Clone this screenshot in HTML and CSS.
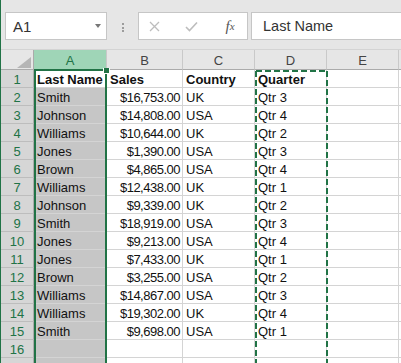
FILE: index.html
```html
<!DOCTYPE html>
<html>
<head>
    <meta charset="UTF-8">
    <title>Sheet</title>
    <link rel="stylesheet" href="styles.css">
</head>
<body>
<div class="app">
    <div class="toolbar">
        <div class="name-box">
            <span>A1</span>
            <span class="name-arrow"></span>
        </div>
        <div class="grip"><i></i><i></i><i></i></div>
        <div class="fx-buttons">
            <span class="fx-btn">
                <svg width="11" height="11" viewBox="0 0 11 11"><path d="M1 1 L10 10 M10 1 L1 10" stroke="#bdbdbd" stroke-width="1.3" fill="none"/></svg>
            </span>
            <span class="fx-btn">
                <svg width="13" height="11" viewBox="0 0 13 11"><path d="M1 6 L4.5 9.5 L12 1.5" stroke="#bdbdbd" stroke-width="1.6" fill="none"/></svg>
            </span>
            <span class="fx-btn fx-label">f<sub>x</sub></span>
        </div>
        <div class="formula">Last Name</div>
    </div>

    <div class="sheet">
        <div class="row hdr-row">
            <div class="cell corner"></div>
            <div class="cell col-hdr active">A</div>
            <div class="cell col-hdr">B</div>
            <div class="cell col-hdr">C</div>
            <div class="cell col-hdr">D</div>
            <div class="cell col-hdr">E</div>
            <div class="cell col-hdr"></div>
        </div>
        <div class="row">
            <div class="cell row-hdr">1</div>
            <div class="cell sel current bold">Last Name</div>
            <div class="cell bold">Sales</div>
            <div class="cell bold">Country</div>
            <div class="cell bold">Quarter</div>
            <div class="cell"></div>
            <div class="cell"></div>
        </div>
        <div class="row">
            <div class="cell row-hdr">2</div>
            <div class="cell sel">Smith</div>
            <div class="cell num">$16,753.00</div>
            <div class="cell">UK</div>
            <div class="cell">Qtr 3</div>
            <div class="cell"></div>
            <div class="cell"></div>
        </div>
        <div class="row">
            <div class="cell row-hdr">3</div>
            <div class="cell sel">Johnson</div>
            <div class="cell num">$14,808.00</div>
            <div class="cell">USA</div>
            <div class="cell">Qtr 4</div>
            <div class="cell"></div>
            <div class="cell"></div>
        </div>
        <div class="row">
            <div class="cell row-hdr">4</div>
            <div class="cell sel">Williams</div>
            <div class="cell num">$10,644.00</div>
            <div class="cell">UK</div>
            <div class="cell">Qtr 2</div>
            <div class="cell"></div>
            <div class="cell"></div>
        </div>
        <div class="row">
            <div class="cell row-hdr">5</div>
            <div class="cell sel">Jones</div>
            <div class="cell num">$1,390.00</div>
            <div class="cell">USA</div>
            <div class="cell">Qtr 3</div>
            <div class="cell"></div>
            <div class="cell"></div>
        </div>
        <div class="row">
            <div class="cell row-hdr">6</div>
            <div class="cell sel">Brown</div>
            <div class="cell num">$4,865.00</div>
            <div class="cell">USA</div>
            <div class="cell">Qtr 4</div>
            <div class="cell"></div>
            <div class="cell"></div>
        </div>
        <div class="row">
            <div class="cell row-hdr">7</div>
            <div class="cell sel">Williams</div>
            <div class="cell num">$12,438.00</div>
            <div class="cell">UK</div>
            <div class="cell">Qtr 1</div>
            <div class="cell"></div>
            <div class="cell"></div>
        </div>
        <div class="row">
            <div class="cell row-hdr">8</div>
            <div class="cell sel">Johnson</div>
            <div class="cell num">$9,339.00</div>
            <div class="cell">UK</div>
            <div class="cell">Qtr 2</div>
            <div class="cell"></div>
            <div class="cell"></div>
        </div>
        <div class="row">
            <div class="cell row-hdr">9</div>
            <div class="cell sel">Smith</div>
            <div class="cell num">$18,919.00</div>
            <div class="cell">USA</div>
            <div class="cell">Qtr 3</div>
            <div class="cell"></div>
            <div class="cell"></div>
        </div>
        <div class="row">
            <div class="cell row-hdr">10</div>
            <div class="cell sel">Jones</div>
            <div class="cell num">$9,213.00</div>
            <div class="cell">USA</div>
            <div class="cell">Qtr 4</div>
            <div class="cell"></div>
            <div class="cell"></div>
        </div>
        <div class="row">
            <div class="cell row-hdr">11</div>
            <div class="cell sel">Jones</div>
            <div class="cell num">$7,433.00</div>
            <div class="cell">UK</div>
            <div class="cell">Qtr 1</div>
            <div class="cell"></div>
            <div class="cell"></div>
        </div>
        <div class="row">
            <div class="cell row-hdr">12</div>
            <div class="cell sel">Brown</div>
            <div class="cell num">$3,255.00</div>
            <div class="cell">USA</div>
            <div class="cell">Qtr 2</div>
            <div class="cell"></div>
            <div class="cell"></div>
        </div>
        <div class="row">
            <div class="cell row-hdr">13</div>
            <div class="cell sel">Williams</div>
            <div class="cell num">$14,867.00</div>
            <div class="cell">USA</div>
            <div class="cell">Qtr 3</div>
            <div class="cell"></div>
            <div class="cell"></div>
        </div>
        <div class="row">
            <div class="cell row-hdr">14</div>
            <div class="cell sel">Williams</div>
            <div class="cell num">$19,302.00</div>
            <div class="cell">UK</div>
            <div class="cell">Qtr 4</div>
            <div class="cell"></div>
            <div class="cell"></div>
        </div>
        <div class="row">
            <div class="cell row-hdr">15</div>
            <div class="cell sel">Smith</div>
            <div class="cell num">$9,698.00</div>
            <div class="cell">USA</div>
            <div class="cell">Qtr 1</div>
            <div class="cell"></div>
            <div class="cell"></div>
        </div>
        <div class="row">
            <div class="cell row-hdr">16</div>
            <div class="cell sel"></div>
            <div class="cell"></div>
            <div class="cell"></div>
            <div class="cell"></div>
            <div class="cell"></div>
            <div class="cell"></div>
        </div>
        <div class="row">
            <div class="cell row-hdr"></div>
            <div class="cell sel"></div>
            <div class="cell"></div>
            <div class="cell"></div>
            <div class="cell"></div>
            <div class="cell"></div>
            <div class="cell"></div>
        </div>

        <!-- selection around column A -->
        <div class="col-selection"></div>
        <div class="fill-handle"></div>

        <!-- copy marquee around column D -->
        <svg class="marquee" width="74" height="300" viewBox="0 0 74 300">
            <g stroke="#217346" stroke-width="2" stroke-dasharray="6 3" fill="none">
                <path d="M1 1 H73"/>
                <path d="M1 1 V300"/>
                <path d="M72 1 V300"/>
            </g>
        </svg>
    </div>
</div>
</body>
</html>
```

FILE: styles.css
```css
body {
    margin: 0;
    width: 401px;
    height: 363px;
    overflow: hidden;
    background: #fff;
    font-family: 'Liberation Sans', Arial, sans-serif;
}

.app {
    height: 363px;
    border-left: 1px solid #217346;
    overflow: hidden;
}

/* formula bar area */

.toolbar {
    height: 50px;
    box-sizing: border-box;
    padding: 12px 0 0 4px;
    background: #e6e6e6;
    border-bottom: 1px solid #d4d4d4;
    display: flex;
    align-items: flex-start;
}

.name-box {
    width: 102px;
    height: 28px;
    box-sizing: border-box;
    padding: 0 5px 0 7px;
    background: #fff;
    border: 1px solid #c6c6c6;
    display: flex;
    align-items: center;
    font-size: 15px;
    color: #333;
}

.name-arrow {
    margin-left: auto;
    width: 0;
    height: 0;
    border-top: 4px solid #777;
    border-left: 3.5px solid transparent;
    border-right: 3.5px solid transparent;
}

.grip {
    margin: 11px 14px 0 15px;
    display: flex;
    flex-direction: column;
    gap: 1.5px;
}

.grip i {
    width: 2px;
    height: 2px;
    background: #9c9c9c;
}

.fx-buttons {
    width: 110px;
    height: 28px;
    box-sizing: border-box;
    background: #fff;
    border: 1px solid #c6c6c6;
    display: grid;
    grid-template-columns: 30px 44px 34px;
    align-items: center;
    justify-items: center;
}

.fx-btn {
    display: flex;
    align-items: center;
}

.fx-label {
    font-family: 'Liberation Serif', 'Times New Roman', serif;
    font-style: italic;
    font-size: 15px;
    color: #555;
}

.fx-label sub {
    font-size: 11px;
    vertical-align: -2px;
}

.formula {
    flex: 1;
    height: 28px;
    box-sizing: border-box;
    margin: 0 -3px 0 3px;
    padding-left: 11px;
    background: #fff;
    border: 1px solid #c6c6c6;
    display: flex;
    align-items: center;
    font-size: 14.5px;
    color: #333;
}

/* grid */

.sheet {
    position: relative;
}

.row {
    display: grid;
    grid-template-columns: 33px 73px 76px 72px 72px 72px 1fr;
    height: 18px;
}

.hdr-row {
    height: 20px;
}

.cell {
    box-sizing: border-box;
    padding: 1px 3px 0;
    border-right: 1px solid #d4d4d4;
    border-bottom: 1px solid #d4d4d4;
    font-size: 13px;
    line-height: 17px;
    color: #111;
    white-space: nowrap;
    overflow: hidden;
}

.bold {
    font-weight: bold;
}

.num {
    text-align: right;
    padding-right: 2px;
    letter-spacing: -0.5px;
}

.sel {
    background: #c6c6c6;
}

.sel.current {
    background: #fff;
}

.corner,
.col-hdr {
    background: #e6e6e6;
    border-bottom-color: #ababab;
    border-right-color: #c9c9c9;
}

.corner {
    display: flex;
    justify-content: flex-end;
    align-items: flex-end;
    padding: 0 2px 1px 0;
    border-right-color: #ababab;
}

.corner::after {
    content: '';
    width: 0;
    height: 0;
    border-left: 14px solid transparent;
    border-bottom: 11px solid #b5b5b5;
}

.col-hdr {
    padding-top: 1px;
    text-align: center;
    line-height: 19px;
    font-size: 13px;
    color: #444;
}

.col-hdr.active {
    background: #9fd5b7;
    color: #217346;
}

.row-hdr {
    background: #d6d6d6;
    border-right-color: #ababab;
    border-bottom-color: #bdbdbd;
    text-align: center;
    padding: 1px 0 0;
    color: #217346;
}

/* overlays */

.col-selection {
    position: absolute;
    left: 33px;
    top: 19px;
    bottom: 0;
    width: 73px;
    box-sizing: border-box;
    border: 2px solid #217346;
    border-bottom: none;
}

.fill-handle {
    position: absolute;
    left: 102px;
    top: 18px;
    width: 5px;
    height: 5px;
    background: #217346;
    border: 1px solid #fff;
    border-top: none;
}

.marquee {
    position: absolute;
    left: 254px;
    top: 20px;
}
```
